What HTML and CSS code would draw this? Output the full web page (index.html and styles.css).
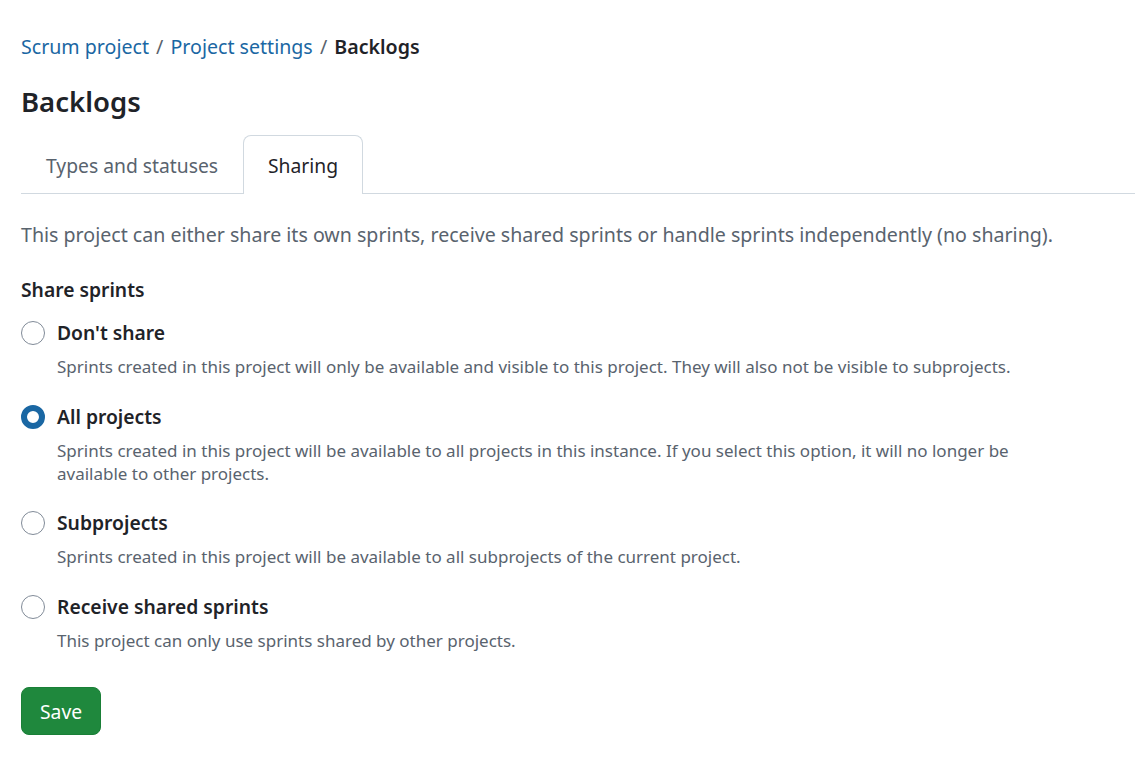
FILE: index.html
```html
<!DOCTYPE HTML>
<html>
<head>
  <meta charset="UTF-8">
  <meta name="viewport" content="width=device-width, initial-scale=1">
  <link rel="stylesheet" href="styles.css">
</head>
<body>
  <div class="page">
    <nav class="breadcrumb">
      <a href="#">Scrum project</a>
      <span class="sep">/</span>
      <a href="#">Project settings</a>
      <span class="sep">/</span>
      <span class="current">Backlogs</span>
    </nav>
    <h1 class="title">Backlogs</h1>

    <div class="tabs">
      <a class="tab" href="#">Types and statuses</a>
      <a class="tab selected" href="#">Sharing</a>
    </div>

    <p class="intro">This project can either share its own sprints, receive shared sprints or handle sprints independently (no sharing).</p>

    <form class="sharing">
      <div class="group-title">Share sprints</div>

      <label class="option">
        <input type="radio" name="share">
        <span class="option-text">
          <span class="option-label">Don't share</span>
          <span class="option-caption">Sprints created in this project will only be available and visible to this project. They will also not be visible to subprojects.</span>
        </span>
      </label>

      <label class="option">
        <input type="radio" name="share" checked>
        <span class="option-text">
          <span class="option-label">All projects</span>
          <span class="option-caption">Sprints created in this project will be available to all projects in this instance. If you select this option, it will no longer be available to other projects.</span>
        </span>
      </label>

      <label class="option">
        <input type="radio" name="share">
        <span class="option-text">
          <span class="option-label">Subprojects</span>
          <span class="option-caption">Sprints created in this project will be available to all subprojects of the current project.</span>
        </span>
      </label>

      <label class="option">
        <input type="radio" name="share">
        <span class="option-text">
          <span class="option-label">Receive shared sprints</span>
          <span class="option-caption">This project can only use sprints shared by other projects.</span>
        </span>
      </label>

      <button type="button" class="save">Save</button>
    </form>
  </div>
</body>
</html>
```

FILE: styles.css
```css
body
{
  margin: 0;
  font-family: "Noto Sans", sans-serif;
  color: #1f2328;
  background-color: #ffffff;
}
.page
{
  padding: 31px 0 0 21px;
}
.breadcrumb
{
  font-size: 19.6px;
  line-height: 32px;
}
.breadcrumb a
{
  color: #1a67a3;
  text-decoration: none;
}
.breadcrumb .sep
{
  color: #59636e;
  margin: 0 2px;
}
.breadcrumb .current
{
  font-weight: 600;
}
.title
{
  font-size: 27.5px;
  font-weight: 600;
  line-height: 40px;
  margin: 19px 0 0 0;
}
.tabs
{
  display: flex;
  margin-top: 13px;
  border-bottom: 1px solid #d1d9e0;
}
.tab
{
  display: block;
  padding: 0 24px;
  height: 57px;
  line-height: 60px;
  font-size: 19.3px;
  color: #59636e;
  text-decoration: none;
  border: 1px solid transparent;
  border-bottom: none;
  border-radius: 8px 8px 0 0;
  margin-bottom: -1px;
}
.tab.selected
{
  color: #1f2328;
  background: #ffffff;
  border-color: #d1d9e0;
  height: 58px;
}
.intro
{
  font-size: 19.6px;
  line-height: 30px;
  color: #59636e;
  margin: 26px 0 0 0;
}
.sharing
{
  margin-top: 27px;
}
.group-title
{
  font-size: 19.3px;
  font-weight: 600;
  line-height: 26px;
  margin-bottom: 15px;
}
.option
{
  display: flex;
  gap: 12px;
  margin-bottom: 23.5px;
  max-width: 1000px;
}
.option input
{
  appearance: none;
  margin: 0;
  flex: none;
  width: 24px;
  height: 24px;
  border: 1px solid #818b98;
  border-radius: 50%;
  background: #ffffff;
  margin-top: 3px;
}
.option input:checked
{
  border: 6px solid #1a67a3;
}
.option-text
{
  display: flex;
  flex-direction: column;
}
.option-label
{
  font-size: 19.3px;
  font-weight: 600;
  line-height: 30px;
}
.option-caption
{
  font-size: 17px;
  line-height: 23px;
  color: #59636e;
  margin-top: 7px;
}
.save
{
  margin-top: 12px;
  font-family: "Noto Sans", sans-serif;
  font-size: 19.3px;
  color: #ffffff;
  background-color: #1f883d;
  border: 1px solid #1a7f37;
  border-radius: 8px;
  padding: 0 18px;
  height: 48px;
  cursor: pointer;
}
```
